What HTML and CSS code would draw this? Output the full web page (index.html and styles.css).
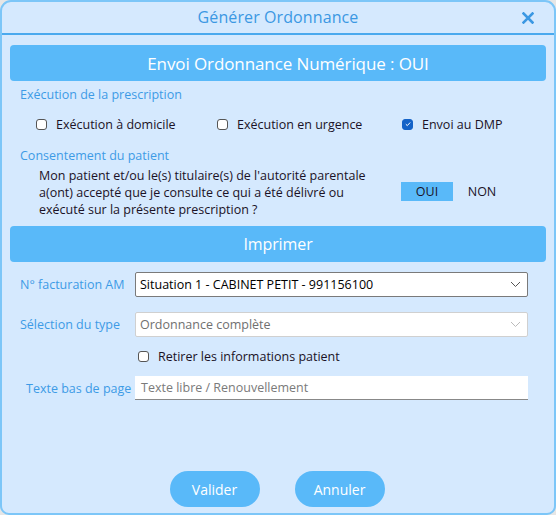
FILE: index.html
```html
<!DOCTYPE html>
<html lang="fr">
<head>
<meta charset="utf-8">
<link rel="stylesheet" href="styles.css">
</head>
<body>
<div class="window">
  <div class="titlebar">
    <span class="title">Générer Ordonnance</span>
    <span class="close">
      <svg width="12" height="12" viewBox="0 0 12 12"><path d="M1.5 1.5 L10.5 10.5 M10.5 1.5 L1.5 10.5" stroke="#3b98e3" stroke-width="2.6" stroke-linecap="square"/></svg>
    </span>
  </div>
  <div class="content">
    <div class="bar bar-first">Envoi Ordonnance Numérique : OUI</div>
    <div class="section-label">Exécution de la prescription</div>
    <div class="checks">
      <label class="check c1"><span class="box"></span>Exécution à domicile</label>
      <label class="check c2"><span class="box"></span>Exécution en urgence</label>
      <label class="check c3"><span class="box checked"><svg width="8" height="8" viewBox="0 0 8 8"><path d="M1.8 4.2 L3.3 5.6 L6.2 2.5" fill="none" stroke="#fff" stroke-width="1"/></svg></span>Envoi au DMP</label>
    </div>
    <div class="section-label sl2">Consentement du patient</div>
    <div class="consent">
      <p class="consent-text">Mon patient et/ou le(s) titulaire(s) de l'autorité parentale<br>a(ont) accepté que je consulte ce qui a été délivré ou<br>exécuté sur la présente prescription ?</p>
      <div class="toggle">
        <span class="opt active">OUI</span>
        <span class="opt">NON</span>
      </div>
    </div>
    <div class="bar bar-second">Imprimer</div>
    <div class="form">
      <div class="row r1">
        <span class="flabel">N° facturation AM</span>
        <div class="select"><span>Situation 1 - CABINET PETIT - 991156100</span>
          <svg width="11" height="7" viewBox="0 0 11 7"><path d="M1 1 L5.5 5.5 L10 1" fill="none" stroke="#555" stroke-width="1"/></svg></div>
      </div>
      <div class="row r2">
        <span class="flabel">Sélection du type</span>
        <div class="select disabled"><span>Ordonnance complète</span>
          <svg width="11" height="7" viewBox="0 0 11 7"><path d="M1 1 L5.5 5.5 L10 1" fill="none" stroke="#bbb" stroke-width="1"/></svg></div>
      </div>
      <div class="row r3">
        <label class="check"><span class="box"></span>Retirer les informations patient</label>
      </div>
      <div class="row r4">
        <span class="flabel fl4">Texte bas de page</span>
        <div class="input"><span>Texte libre / Renouvellement</span></div>
      </div>
    </div>
    <div class="buttons">
      <button class="btn">Valider</button>
      <button class="btn">Annuler</button>
    </div>
  </div>
</div>
</body>
</html>
```
FILE: styles.css
```css
* { box-sizing: border-box; }
html, body { margin: 0; padding: 0; background: #e6e6e6; }
body {
  font-family: "Open Sans", "Noto Sans", sans-serif;
  font-size: 12.5px;
  color: #1b1226;
}
.window {
  width: 556px;
  height: 515px;
  background: #d5e9fe;
  border: 2px solid #7cc6f8;
  border-radius: 11px 11px 9px 9px;
  display: flex;
  flex-direction: column;
  overflow: hidden;
}
.titlebar {
  height: 33px;
  flex: none;
  border-bottom: 2px solid #4aa9ee;
  display: flex;
  align-items: center;
  justify-content: center;
  position: relative;
}
.title {
  color: #3b98e3;
  font-size: 16px;
  letter-spacing: 0.1px;
  margin-top: -2px;
}
.close {
  position: absolute;
  right: 20px;
  top: 10px;
  display: flex;
}
.content {
  flex: 1;
  padding: 10px 8px 0 8px;
  display: flex;
  flex-direction: column;
}
.bar {
  background: #59b9f9;
  color: #fff;
  border-radius: 4px;
  height: 36px;
  display: flex;
  align-items: center;
  justify-content: center;
  font-size: 16px;
  letter-spacing: -0.1px;
}
.bar-first { padding-left: 20px; font-size: 17px; }
.section-label {
  color: #3d9be6;
  margin: 5px 0 0 10px;
  height: 17px;
  line-height: 17px;
}
.sl2 { margin-top: 12px; }
.checks {
  display: flex;
  height: 22px;
  align-items: center;
  margin-top: 10px;
}
.check {
  display: flex;
  align-items: center;
  gap: 9px;
}
.c1 { margin-left: 26px; width: 181px; }
.c2 { width: 185px; }
.box {
  width: 11px;
  height: 11px;
  border: 1px solid #555;
  border-radius: 3px;
  background: #fff;
  display: flex;
  align-items: center;
  justify-content: center;
}
.box.checked {
  background: #1463c8;
  border-color: #1463c8;
}
.consent {
  display: flex;
  align-items: center;
  margin-top: 3px;
}
.consent-text {
  margin: 0 0 0 29px;
  width: 345px;
  line-height: 17px;
  white-space: nowrap;
}
.toggle {
  display: flex;
  margin-left: 17px;
  margin-top: -3px;
}
.opt {
  width: 52px;
  height: 19px;
  display: flex;
  align-items: center;
  justify-content: center;
  margin-right: 3px;
}
.opt.active { background: #59b9f9; }
.bar-second { margin-top: 8px; }
.form { margin-top: 10px; }
.row {
  display: flex;
  align-items: center;
}
.flabel {
  color: #3d9be6;
  width: 125px;
  padding-left: 10px;
}
.fl4 { padding-left: 16px; white-space: nowrap; }
.select {
  width: 393px;
  height: 25px;
  background: #fff;
  border: 1px solid #7a7a7a;
  border-radius: 2px;
  display: flex;
  align-items: center;
  justify-content: space-between;
  padding: 0 6px 0 4px;
  color: #000;
}
.select.disabled {
  border-color: #d0d0d0;
  color: #707070;
}
.r2 { margin-top: 15px; }
.r3 { margin-top: 9px; padding-left: 128px; height: 20px; }
.r4 { margin-top: 10px; }
.input {
  width: 393px;
  height: 24px;
  background: #fff;
  border-bottom: 1px solid #888;
  display: flex;
  align-items: center;
  padding-left: 6px;
  color: #7a7a7a;
}
.buttons {
  margin-top: auto;
  margin-bottom: 6px;
  display: flex;
  justify-content: center;
  gap: 35px;
  padding-right: 2px;
}
.btn {
  width: 90px;
  height: 36px;
  border: none;
  border-radius: 18px;
  background: #59b9f9;
  color: #fff;
  font-family: "Open Sans", "Noto Sans", sans-serif;
  font-size: 14px;
}
```
